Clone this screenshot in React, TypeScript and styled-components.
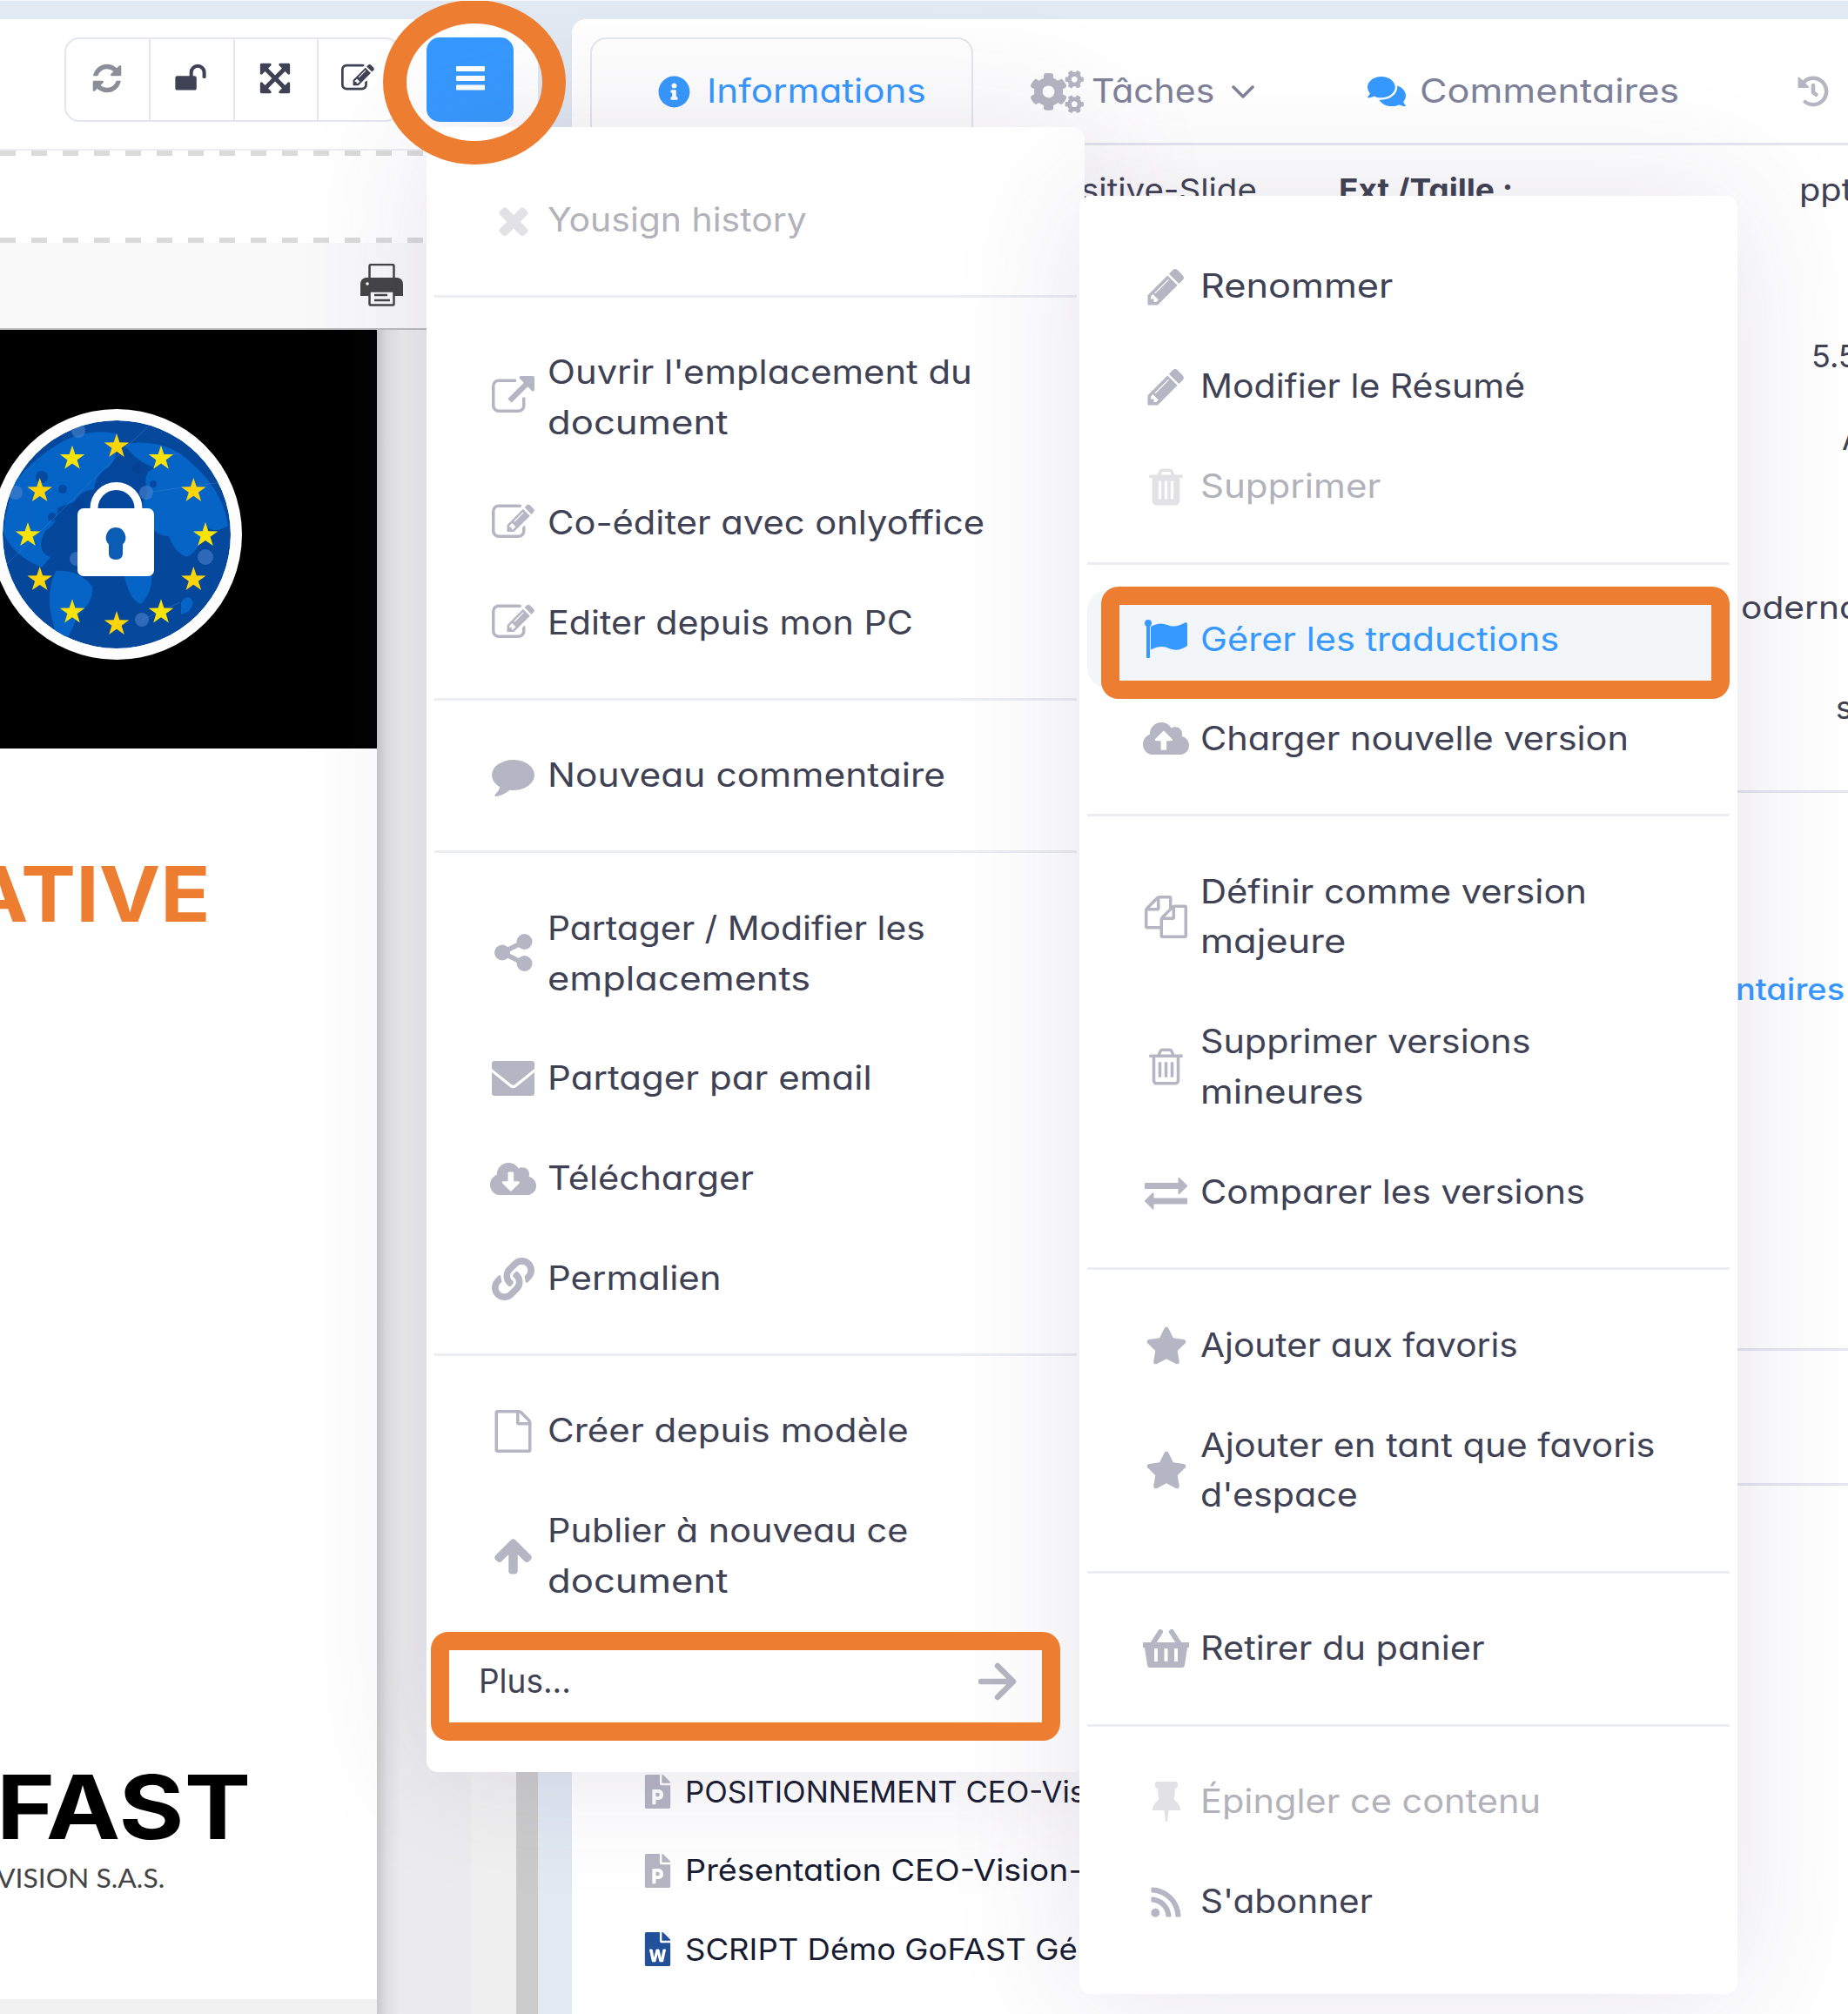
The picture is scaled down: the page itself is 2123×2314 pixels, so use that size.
import React, { useLayoutEffect, useRef, useState } from "react";
import styled, { createGlobalStyle } from "styled-components";
import {
  FaCloudDownloadAlt,
  FaCloudUploadAlt,
  FaCogs,
  FaComments,
  FaFilePowerpoint,
  FaFileWord,
  FaHistory,
  FaInfoCircle,
  FaLink,
  FaRss,
  FaStar,
} from "react-icons/fa";

const c = {
  text: "#3f4254",
  dark: "#181c32",
  muted: "#7e8299",
  icon: "#b5b5c3",
  primary: "#3699ff",
  line: "#ebedf3",
  border: "#e4e6ef",
  page: "#e1e9f2",
  mark: "#ed7d31",
};

const Global = createGlobalStyle`
  * { box-sizing: border-box; }
  body { margin: 0; background: ${c.page}; overflow: hidden; }
  svg { display: block; flex: none; }
`;

/* ---------- text stretched to a measure ---------- */

const FitBox = styled.span<{ $w: number }>`
  display: block;
  flex: none;
  width: ${(p) => p.$w}px;
`;

const FitSpan = styled.span`
  display: block;
  width: max-content;
  white-space: pre;
  transform-origin: 0 50%;
`;

function Fit({ w, children }: { w: number; children: string }) {
  const ref = useRef<HTMLSpanElement>(null);
  const [scale, setScale] = useState(1);
  useLayoutEffect(() => {
    const el = ref.current;
    if (el) setScale(w / el.offsetWidth);
  }, [w, children]);
  return (
    <FitBox $w={w}>
      <FitSpan ref={ref} style={{ transform: `scaleX(${scale})` }}>
        {children}
      </FitSpan>
    </FitBox>
  );
}

/* ---------- icons ---------- */

const glyphs = {
  external:
    "M1408 928v320q0 119-84.5 203.5t-203.5 84.5h-832q-119 0-203.5-84.5t-84.5-203.5v-832q0-119 84.5-203.5t203.5-84.5h704q14 0 23 9t9 23v64q0 14-9 23t-23 9h-704q-66 0-113 47t-47 113v832q0 66 47 113t113 47h832q66 0 113-47t47-113v-320q0-14 9-23t23-9h64q14 0 23 9t9 23zm384-864v512q0 26-19 45t-45 19-45-19l-176-176-652 652q-10 10-23 10t-23-10l-114-114q-10-10-10-23t10-23l652-652-176-176q-19-19-19-45t19-45 45-19h512q26 0 45 19t19 45z",
  edit: "M888 1184l116-116-152-152-116 116v56h96v96h56zm440-720q-16-16-33 1l-350 350q-17 17-1 33t33-1l350-350q17-17 1-33zm80 594v190q0 119-84.5 203.5t-203.5 84.5h-832q-119 0-203.5-84.5t-84.5-203.5v-832q0-119 84.5-203.5t203.5-84.5h832q63 0 117 25 15 7 18 23 3 17-9 29l-49 49q-14 14-32 8-23-6-45-6h-832q-66 0-113 47t-47 113v832q0 66 47 113t113 47h832q66 0 113-47t47-113v-126q0-13 9-22l64-64q15-15 35-7t20 29zm-96-738l288 288-672 672h-288v-288zm444 132l-92 92-288-288 92-92q28-28 68-28t68 28l152 152q28 28 28 68t-28 68z",
  trash:
    "M704 736v576q0 14-9 23t-23 9h-64q-14 0-23-9t-9-23v-576q0-14 9-23t23-9h64q14 0 23 9t9 23zm256 0v576q0 14-9 23t-23 9h-64q-14 0-23-9t-9-23v-576q0-14 9-23t23-9h64q14 0 23 9t9 23zm256 0v576q0 14-9 23t-23 9h-64q-14 0-23-9t-9-23v-576q0-14 9-23t23-9h64q14 0 23 9t9 23zm128 724v-948h-896v948q0 22 7 40.5t14.5 27 10.5 8.5h832q3 0 10.5-8.5t14.5-27 7-40.5zm-672-1076h448l-48-117q-7-9-17-11h-317q-10 2-17 11zm928 32v64q0 14-9 23t-23 9h-96v948q0 83-47 143.5t-113 60.5h-832q-66 0-113-58.5t-47-141.5v-952h-96q-14 0-23-9t-9-23v-64q0-14 9-23t23-9h309l70-167q15-37 54-63t79-26h320q40 0 79 26t54 63l70 167h309q14 0 23 9t9 23z",
  trashFull:
    "M704 1376v-704q0-14-9-23t-23-9h-64q-14 0-23 9t-9 23v704q0 14 9 23t23 9h64q14 0 23-9t9-23zm256 0v-704q0-14-9-23t-23-9h-64q-14 0-23 9t-9 23v704q0 14 9 23t23 9h64q14 0 23-9t9-23zm256 0v-704q0-14-9-23t-23-9h-64q-14 0-23 9t-9 23v704q0 14 9 23t23 9h64q14 0 23-9t9-23zm-544-992h448l-48-117q-7-9-17-11h-317q-10 2-17 11zm928 32v64q0 14-9 23t-23 9h-96v948q0 83-47 143.5t-113 60.5h-832q-66 0-113-58.5t-47-141.5v-952h-96q-14 0-23-9t-9-23v-64q0-14 9-23t23-9h309l70-167q15-37 54-63t79-26h320q40 0 79 26t54 63l70 167h309q14 0 23 9t9 23z",
  files:
    "M1696 384q40 0 68 28t28 68v1216q0 40-28 68t-68 28h-960q-40 0-68-28t-28-68v-288h-544q-40 0-68-28t-28-68v-672q0-40 20-88t48-76l408-408q28-28 76-48t88-20h416q40 0 68 28t28 68v328q68-40 128-40h416zm-544 213l-299 299h299v-299zm-640-384l-299 299h299v-299zm196 647l316-316v-416h-384v416q0 40-28 68t-68 28h-416v640h512v-256q0-40 20-88t48-76zm956 804v-1152h-384v416q0 40-28 68t-68 28h-416v640h896z",
  file: "M1596 380q28 28 48 76t20 88v1152q0 40-28 68t-68 28h-1344q-40 0-68-28t-28-68v-1600q0-40 28-68t68-28h896q40 0 88 20t76 48zm-444-244v376h376q-10-29-22-41l-313-313q-12-12-41-22zm384 1528v-1024h-416q-40 0-68-28t-28-68v-416h-768v1536h1280z",
  comment:
    "M1792 896q0 174-120 321.5t-326 233-450 85.5q-70 0-145-8-198 175-460 242-49 14-114 22-17 2-30.5-9t-17.5-29v-1q-3-4-.5-12t2-10 4.5-9.5l6-9 7-8.5 8-9q7-8 31-34.5t34.5-38 31-39.5 32.5-51 27-59 26-76q-157-89-247.5-220t-90.5-281q0-130 71-248.5t191-204.5 286-136.5 348-50.5q244 0 450 85.5t326 233 120 321.5z",
  pencil:
    "M491 1536l91-91-235-235-91 91v107h128v128h107zm523-928q0-22-22-22-10 0-17 7l-542 542q-7 7-7 17 0 22 22 22 10 0 17-7l542-542q7-7 7-17zm-54-192l416 416-832 832h-416v-416zm683 96q0 53-37 90l-166 166-416-416 166-165q36-38 90-38 53 0 91 38l235 234q37 39 37 91z",
  times:
    "M1490 1322q0 40-28 68l-136 136q-28 28-68 28t-68-28l-294-294-294 294q-28 28-68 28t-68-28l-136-136q-28-28-28-68t28-68l294-294-294-294q-28-28-28-68t28-68l136-136q28-28 68-28t68 28l294 294 294-294q28-28 68-28t68 28l136 136q28 28 28 68t-28 68l-294 294 294 294q28 28 28 68z",
  arrowUp:
    "M1675 971q0 51-37 90l-75 75q-38 38-91 38-54 0-90-38l-294-293v704q0 52-37.5 84.5t-90.5 32.5h-128q-53 0-90.5-32.5t-37.5-84.5v-704l-294 293q-36 38-90 38t-90-38l-75-75q-38-38-38-90 0-53 38-91l651-651q35-37 90-37 54 0 91 37l651 651q37 39 37 91z",
  refresh:
    "M1639 1056q0 5-1 7-64 268-268 434.5t-478 166.5q-146 0-282.5-55t-243.5-157l-129 129q-19 19-45 19t-45-19-19-45v-448q0-26 19-45t45-19h448q26 0 45 19t19 45-19 45l-137 137q71 66 161 102t187 36q134 0 250-65t186-179q11-17 53-117 8-23 30-23h192q13 0 22.5 9.5t9.5 22.5zm25-800v448q0 26-19 45t-45 19h-448q-26 0-45-19t-19-45 19-45l138-138q-148-137-349-137-134 0-250 65t-186 179q-11 17-53 117-8 23-30 23h-199q-13 0-22.5-9.5t-9.5-22.5v-7q65-268 270-434.5t480-166.5q146 0 284 55.5t245 156.5l130-129q19-19 45-19t45 19 19 45z",
  exchange:
    "M1792 1184v192q0 13-9.5 22.5t-22.5 9.5h-1376v192q0 13-9.5 22.5t-22.5 9.5q-12 0-24-10l-319-320q-9-9-9-22 0-14 9-23l320-320q9-9 23-9 13 0 22.5 9.5t9.5 22.5v192h1376q13 0 22.5 9.5t9.5 22.5zm0-544q0 14-9 23l-320 320q-9 9-23 9-13 0-22.5-9.5t-9.5-22.5v-192h-1376q-13 0-22.5-9.5t-9.5-22.5v-192q0-13 9.5-22.5t22.5-9.5h1376v-192q0-14 9-23t23-9q12 0 24 10l319 319q9 9 9 23z",
  unlock:
    "M1728 576v256q0 26-19 45t-45 19h-64q-26 0-45-19t-19-45v-256q0-106-75-181t-181-75-181 75-75 181v192h96q40 0 68 28t28 68v576q0 40-28 68t-68 28h-960q-40 0-68-28t-28-68v-576q0-40 28-68t68-28h672v-192q0-185 131.5-316.5t316.5-131.5 316.5 131.5 131.5 316.5z",
  expand:
    "M1411 541l-355 355 355 355 144-144q29-31 70-14 39 17 39 59v448q0 26-19 45t-45 19h-448q-42 0-59-40-17-39 14-69l144-144-355-355-355 355 144 144q31 30 14 69-17 40-59 40h-448q-26 0-45-19t-19-45v-448q0-42 40-59 39-17 69 14l144 144 355-355-355-355-144 144q-19 19-45 19-12 0-24-5-40-17-40-59v-448q0-26 19-45t45-19h448q42 0 59 40 17 39-14 69l-144 144 355 355 355-355-144-144q-31-30-14-69 17-40 59-40h448q26 0 45 19t19 45v448q0 42-39 59-13 5-25 5-26 0-45-19z",
};

const Glyph = ({ name, size = 49 }: { name: keyof typeof glyphs; size?: number }) => (
  <svg width={size} height={size} viewBox="0 0 1792 1792" fill="currentColor">
    <path d={glyphs[name]} />
  </svg>
);

const Share = () => (
  <svg width="44" height="43" viewBox="0 0 44 43" fill="currentColor">
    <path d="M34 9L9 21.500 34 34" fill="none" stroke="currentColor" strokeWidth="5.500" />
    <circle cx="34.500" cy="9" r="9" />
    <circle cx="9" cy="21.500" r="9" />
    <circle cx="34.500" cy="34" r="9" />
  </svg>
);

const Envelope = () => (
  <svg width="49" height="40" viewBox="0 0 49 40" fill="currentColor">
    <path d="M3 0h43q3 0 3 3v6L26.500 27q-2 1.500-4 0L0 9V3q0-3 3-3z" />
    <path d="M0 13l21 17q3.500 2.500 7 0l21-17v24q0 3-3 3H3q-3 0-3-3z" />
  </svg>
);

const Flag = () => (
  <svg width="49" height="44" viewBox="0 0 49 44" fill="currentColor">
    <circle cx="4" cy="4" r="4" />
    <rect x="2" y="3" width="4" height="41" rx="1" />
    <path d="M7 8q10-6 19-2 9 4 20-2.500 3-1 3 1.500v25q-11 7.500-21 3-9-4.500-21 1.500z" />
  </svg>
);

const Basket = () => (
  <svg width="55" height="44" viewBox="0 0 55 44">
    <path d="M12 17L21 3M43 17L34 3" stroke="currentColor" strokeWidth="6" strokeLinecap="round" />
    <path
      fill="currentColor"
      fillRule="evenodd"
      d="M1 15h53v6h-2l-3 20q-.5 3-3 3H9q-2.500 0-3-3L3 21H1zM14 22v15h4V22zm11.500 0v15h4V22zM37 22v15h4V22z"
    />
  </svg>
);

const Pin = () => (
  <svg width="32" height="46" viewBox="0 0 32 46" fill="currentColor">
    <path d="M5 0h22q2 0 2 2.500V5q0 2-3 3l-1 13q7 5 7 12H0q0-7 7-12L6 8Q3 7 3 5V2.500Q3 0 5 0z" />
    <path d="M13.500 33h5L17 46h-2z" />
  </svg>
);

const ArrowRight = () => (
  <svg width="44" height="44" viewBox="0 0 44 44" fill="none" stroke="currentColor" strokeWidth="6.500" strokeLinecap="round" strokeLinejoin="round">
    <path d="M3 22h36M22 4l18 18-18 18" />
  </svg>
);

const Chevron = () => (
  <svg width="26" height="15" viewBox="0 0 26 15" fill="none" stroke="currentColor" strokeWidth="3.500" strokeLinecap="round" strokeLinejoin="round">
    <path d="M2 2l11 11L24 2" />
  </svg>
);

const Bars = () => (
  <svg width="33" height="28" viewBox="0 0 33 28" fill="#fff">
    <rect width="33" height="6" rx="1" />
    <rect y="11" width="33" height="6" rx="1" />
    <rect y="21.500" width="33" height="6" rx="1" />
  </svg>
);

const Printer = () => (
  <svg width="49" height="49" viewBox="0 0 49 49">
    <path d="M10.500 16V3q0-2 2-2h24q2 0 2 2v13" fill="#fafafa" stroke="#444" strokeWidth="2.500" />
    <path d="M6 16h37q6 1 6 8v13H0V24q0-7 6-8z" fill="#444" />
    <circle cx="8" cy="23" r="1.800" fill="#fff" />
    <rect x="10.500" y="31.500" width="28" height="16" rx="1" fill="#fafafa" stroke="#444" strokeWidth="2.500" />
    <path d="M16 36h15M16 42h18" stroke="#444" strokeWidth="2.600" />
  </svg>
);

const starPoints = (cx: number, cy: number, r: number) =>
  Array.from({ length: 10 }, (_, i) => {
    const a = (Math.PI / 5) * i - Math.PI / 2;
    const rr = i % 2 ? r * 0.39 : r;
    return `${(cx + rr * Math.cos(a)).toFixed(1)},${(cy + rr * Math.sin(a)).toFixed(1)}`;
  }).join(" ");

const PrivacyBadge = () => (
  <svg width="290" height="290" viewBox="-145 -145 290 290">
    <defs>
      <clipPath id="globe">
        <circle r="131" />
      </clipPath>
    </defs>
    <circle r="144" fill="#fdfdfd" />
    <g clipPath="url(#globe)">
      <circle r="131" fill="#05489c" />
      <g fill="#0564c6">
        <path d="M-60-108q30-14 60-8 4 22-8 38-16 8-18 26-16 2-22 14l-20 8q2 16-14 26-12 24 6 30l-10 12q-34-14-44-40 4-36 14-60 26-30 56-46z" />
        <path d="M8-104q50-8 80 24 34 30 40 70-16 10-26 0-6 30-22 36-14-6-20-24-18 0-24-20-12-14 0-30-8-24 8-28-22-8-36-28z" />
        <path d="M-70 42q26-2 42 18 2 18-18 34-6 24-20 34l-8-30q-8-30 4-56z" />
        <path d="M8 44h32q2 22-12 36-14-4-20-36z" />
        <path d="M74 78q8-12 14 0-2 12-14 14z" />
      </g>
      <g fill="#063f92" opacity=".7">
        <circle cx="-62" cy="-52" r="5" />
        <circle cx="-86" cy="-66" r="7" />
        <circle cx="-44" cy="-34" r="6" />
        <circle cx="24" cy="-76" r="6" />
        <circle cx="42" cy="-58" r="4" />
        <circle cx="-74" cy="-20" r="5" />
      </g>
      <g fill="#4c83cf" opacity=".6">
        <circle cx="-44" cy="-119" r="8" />
        <circle cx="-116" cy="-48" r="8" />
        <circle cx="102" cy="26" r="9" />
        <circle cx="29" cy="98" r="8" />
        <circle cx="34" cy="-48" r="8" />
        <circle cx="-46" cy="28" r="8" />
      </g>
      <path d="M-132 40L-20-70 40-128M34-48l86-12M29 98l44-20" stroke="#4c83cf" strokeOpacity=".45" fill="none" />
    </g>
    {Array.from({ length: 12 }, (_, i) => {
      const a = (Math.PI / 6) * i;
      return <polygon key={i} points={starPoints(102 * Math.cos(a), 1 + 102 * Math.sin(a), 15)} fill={i % 2 ? "#fbd40c" : "#f7e30a"} />;
    })}
    <path d="M-26-26v-4a25.500 25.500 0 0 1 51 0v4" fill="none" stroke="#fff" strokeWidth="9" />
    <rect x="-45" y="-30" width="88" height="78" rx="7" fill="#fff" />
    <path d="M-1-8a11.500 11.500 0 0 1 8 19.500V22q0 7-8 7t-8-7V11.500A11.500 11.500 0 0 1-1-8z" fill="#0a5cb5" />
  </svg>
);

/* ---------- page frame ---------- */

const Page = styled.div`
  position: relative;
  display: flex;
  gap: 39px;
  width: 2123px;
  height: 2314px;
  padding-top: 21px;
  overflow: hidden;
  background: ${c.page};
  border-top: 1px solid #f7f9fb;
  color: ${c.text};
  font: 400 38px/57.5px Inter, "Open Sans", sans-serif;
  font-feature-settings: "cv11", "ss03";
`;

const DocumentPane = styled.section`
  display: flex;
  flex-direction: column;
  flex: none;
  width: 618px;
  background: #fff;
  border-top-right-radius: 16px;
  overflow: hidden;
`;

const Toolbar = styled.div`
  display: flex;
  align-items: flex-start;
  gap: 30px;
  height: 151px;
  padding: 21px 0 0 74px;
  border-bottom: 2px solid ${c.line};
`;

const ButtonGroup = styled.div`
  display: flex;
  height: 97px;
  width: 386px;
  border: 2px solid ${c.border};
  border-radius: 17px;
`;

const ToolButton = styled.div<{ $dim?: boolean }>`
  display: flex;
  align-items: center;
  justify-content: center;
  flex: 0 0 96.500px;
  padding: 0 2px 3px 0;
  color: ${(p) => (p.$dim ? "#8b8d98" : c.text)};
  & + & {
    border-left: 2px solid ${c.border};
  }
  &:first-child {
    flex-basis: 95px;
  }
  &:last-child {
    padding-right: 5px;
  }
`;

const MenuButton = styled.div`
  display: flex;
  align-items: center;
  justify-content: center;
  width: 100px;
  height: 97px;
  padding-bottom: 3px;
  border-radius: 15px;
  background: ${c.primary};
`;

const DropStrip = styled.div`
  height: 106px;
  border: solid transparent;
  border-width: 6px 0;
  background:
    repeating-linear-gradient(90deg, #dadada 0 18px, transparent 18px 36px) top / 100% 6px no-repeat border-box,
    repeating-linear-gradient(90deg, #dadada 0 18px, transparent 18px 36px) bottom / 100% 6px no-repeat border-box;
`;

const ViewerBar = styled.div`
  display: flex;
  align-items: center;
  height: 100px;
  padding-left: 414px;
  padding-bottom: 2px;
  background: #f9f9fa;
  border-bottom: 2px solid #bdbdbf;
`;

const Viewer = styled.div`
  display: flex;
  flex: 1;
  background: #ececef;
`;

const SlideColumn = styled.div`
  display: flex;
  flex-direction: column;
  width: 433px;
  background: #f1f1f1;
`;

const Slide = styled.div`
  display: flex;
  flex-direction: column;
  height: 1918px;
  background: #fff;
`;

const SlideHero = styled.div`
  height: 481px;
  padding-top: 90px;
  background: #000;
  overflow: hidden;
  svg {
    margin-left: -11px;
  }
`;

const SlideTitle = styled.div`
  margin: 112px 0 0 -38px;
  font: 700 88px/110px Inter, sans-serif;
  color: ${c.mark};
`;

const SlideBrand = styled.div`
  margin: 934px 0 0 -4px;
  font: 700 102px/120px Inter, sans-serif;
  color: #000;
`;

const SlideCompany = styled.div`
  margin: 1px 0 0 -4px;
  font: 400 31px/40px Lato, sans-serif;
  color: #444;
`;

const PageShade = styled.div`
  width: 108px;
  background: linear-gradient(90deg, #c9c9cb, #e0e0e3 12px, #ececef 28px);
`;

const ViewerGutter = styled.div`
  flex: 1;
  background: #f0f0f0;
`;

const Scrollbar = styled.div`
  width: 25px;
  background: #cbcbcb;
`;

/* ---------- right panel ---------- */

const InfoPane = styled.section`
  display: flex;
  flex-direction: column;
  flex: none;
  width: 1500px;
  background: #fff;
  border-top-left-radius: 16px;
`;

const Tabs = styled.nav`
  display: flex;
  height: 145px;
  padding: 21px 0 0 21px;
  border-bottom: 3px solid ${c.border};
  color: ${c.muted};
`;

const Tab = styled.div<{ $w: number; $gap: number; $active?: boolean }>`
  display: flex;
  align-items: center;
  flex: none;
  gap: ${(p) => p.$gap}px;
  width: ${(p) => p.$w}px;
  height: 122px;
  border: 2px solid ${(p) => (p.$active ? c.border : "transparent")};
  border-bottom: 0;
  border-radius: 18px 18px 0 0;
  color: ${(p) => (p.$active ? c.primary : "inherit")};
  padding-left: ${(p) => (p.$active ? 76 : 64)}px;
`;

const Tint = styled.span<{ $color: string }>`
  color: ${(p) => p.$color};
`;

const ChevronSlot = styled.span`
  margin-left: 11px;
`;

const Section = styled.div<{ $h: number }>`
  display: flex;
  flex-direction: column;
  flex: none;
  height: ${(p) => p.$h}px;
  border-bottom: 3px solid ${c.border};
`;

const InfoRow = styled.div<{ $top: number; $left: number }>`
  display: flex;
  flex: none;
  height: 56px;
  margin-top: ${(p) => p.$top}px;
  padding-left: ${(p) => p.$left}px;
  font-size: 36px;
  line-height: 56px;
`;

const Label = styled.span`
  width: 529px;
  font-weight: 700;
`;

const ValueCell = styled.span`
  width: 296px;
`;

const PaneLink = styled.span`
  color: ${c.primary};
  font-weight: 500;
  font-size: 34px;
`;

const Files = styled.ul`
  list-style: none;
  margin: 306px 0 0;
  padding: 0 0 0 84px;
`;

const FileRow = styled.li`
  display: flex;
  align-items: center;
  gap: 18px;
  height: 90.700px;
  font-size: 34.500px;
  color: ${c.dark};
`;

const FileIcon = styled.span<{ $color: string }>`
  display: flex;
  justify-content: center;
  width: 28px;
  color: ${(p) => p.$color};
`;

/* ---------- menus ---------- */

const Menu = styled.div<{ $x: number; $y: number; $h: number; $pad: number }>`
  position: absolute;
  left: ${(p) => p.$x}px;
  top: ${(p) => p.$y}px;
  width: 756px;
  height: ${(p) => p.$h}px;
  padding: ${(p) => p.$pad}px 9px 0;
  background: #fff;
  border-radius: 13px;
  box-shadow: 0 0 147px rgba(82, 63, 105, 0.15);
`;

const Item = styled.div<{ $state?: string; $lh?: number }>`
  display: flex;
  align-items: center;
  padding: 28.750px 0 28.750px 53px;
  border-radius: 24px;
  line-height: ${(p) => p.$lh ?? 57.5}px;
  color: ${(p) => (p.$state === "active" ? c.primary : c.text)};
  background: ${(p) => (p.$state === "active" ? "#f3f6f9" : "transparent")};
  opacity: ${(p) => (p.$state === "off" ? 0.4 : 1)};
`;

const IconSlot = styled.span<{ $active?: boolean }>`
  display: flex;
  justify-content: center;
  flex: none;
  width: 75px;
  margin-right: 2px;
  color: ${(p) => (p.$active ? c.primary : c.icon)};
`;

const MoreItem = styled(Item)`
  justify-content: space-between;
  padding-left: 51px;
  padding-right: 69px;
  svg {
    color: ${c.icon};
  }
`;

const Divider = styled.hr<{ $m: number }>`
  height: 3px;
  margin: ${(p) => p.$m}px 0;
  border: 0;
  background: ${c.line};
`;

/* ---------- annotations ---------- */

const Ring = styled.div`
  position: absolute;
  left: 440px;
  top: -1px;
  width: 210px;
  height: 189px;
  border: 27px solid ${c.mark};
  border-radius: 50%;
`;

const Frame = styled.div<{ $x: number; $y: number; $w: number; $h: number }>`
  position: absolute;
  left: ${(p) => p.$x}px;
  top: ${(p) => p.$y}px;
  width: ${(p) => p.$w}px;
  height: ${(p) => p.$h}px;
  border: 21px solid ${c.mark};
  border-radius: 20px;
`;

type Entry = { icon: React.ReactNode; lines: [string, number][]; state?: string; lh?: number };

const mainMenu: Entry[][] = [
  [{ icon: <Glyph name="times" size={50} />, lines: [["Yousign history", 298]], state: "off" }],
  [
    { icon: <Glyph name="external" />, lines: [["Ouvrir l'emplacement du", 488], ["document", 208]] },
    { icon: <Glyph name="edit" />, lines: [["Co-éditer avec onlyoffice", 502]] },
    { icon: <Glyph name="edit" />, lines: [["Editer depuis mon PC", 420]] },
  ],
  [{ icon: <Glyph name="comment" />, lines: [["Nouveau commentaire", 457]] }],
  [
    { icon: <Share />, lines: [["Partager / Modifier les", 434], ["emplacements", 302]], lh: 58 },
    { icon: <Envelope />, lines: [["Partager par email", 373]] },
    { icon: <FaCloudDownloadAlt size={53} />, lines: [["Télécharger", 237]] },
    { icon: <FaLink size={49} />, lines: [["Permalien", 200]] },
  ],
  [
    { icon: <Glyph name="file" />, lines: [["Créer depuis modèle", 415]] },
    { icon: <Glyph name="arrowUp" />, lines: [["Publier à nouveau ce", 414], ["document", 208]] },
  ],
];

const subMenu: Entry[][] = [
  [
    { icon: <Glyph name="pencil" />, lines: [["Renommer", 221]] },
    { icon: <Glyph name="pencil" />, lines: [["Modifier le Résumé", 373]] },
    { icon: <Glyph name="trashFull" />, lines: [["Supprimer", 207]], state: "off" },
  ],
  [
    { icon: <Flag />, lines: [["Gérer les traductions", 412]], state: "active", lh: 56 },
    { icon: <FaCloudUploadAlt size={53} />, lines: [["Charger nouvelle version", 492]] },
  ],
  [
    { icon: <Glyph name="files" />, lines: [["Définir comme version", 444], ["majeure", 167]] },
    { icon: <Glyph name="trash" />, lines: [["Supprimer versions", 380], ["mineures", 187]] },
    { icon: <Glyph name="exchange" />, lines: [["Comparer les versions", 442]] },
  ],
  [
    { icon: <FaStar size={48} />, lines: [["Ajouter aux favoris", 365]] },
    { icon: <FaStar size={48} />, lines: [["Ajouter en tant que favoris", 522], ["d'espace", 181]] },
  ],
  [{ icon: <Basket />, lines: [["Retirer du panier", 327]] }],
  [
    { icon: <Pin />, lines: [["Épingler ce contenu", 391]], state: "off" },
    { icon: <FaRss size={39} />, lines: [["S'abonner", 198]] },
  ],
];

const Groups = ({ groups, spacing }: { groups: Entry[][]; spacing: number }) => (
  <>
    {groups.map((group, g) => (
      <React.Fragment key={g}>
        {g > 0 && <Divider $m={spacing} />}
        {group.map((entry, i) => (
          <Item key={i} $state={entry.state} $lh={entry.lh}>
            <IconSlot $active={entry.state === "active"}>{entry.icon}</IconSlot>
            <div>
              {entry.lines.map(([text, w]) => (
                <Fit key={text} w={w}>
                  {text}
                </Fit>
              ))}
            </div>
          </Item>
        ))}
      </React.Fragment>
    ))}
  </>
);

export default function App() {
  return (
    <Page>
      <Global />
      <DocumentPane>
        <Toolbar>
          <ButtonGroup>
            <ToolButton $dim><Glyph name="refresh" size={38} /></ToolButton>
            <ToolButton><Glyph name="unlock" size={38} /></ToolButton>
            <ToolButton><Glyph name="expand" size={40} /></ToolButton>
            <ToolButton><Glyph name="edit" size={38} /></ToolButton>
          </ButtonGroup>
          <MenuButton><Bars /></MenuButton>
        </Toolbar>
        <DropStrip />
        <ViewerBar><Printer /></ViewerBar>
        <Viewer>
          <SlideColumn>
            <Slide>
              <SlideHero><PrivacyBadge /></SlideHero>
              <SlideTitle><Fit w={279}>ATIVE</Fit></SlideTitle>
              <SlideBrand><Fit w={292}>FAST</Fit></SlideBrand>
              <SlideCompany><Fit w={193}>VISION S.A.S.</Fit></SlideCompany>
            </Slide>
          </SlideColumn>
          <PageShade />
          <ViewerGutter />
          <Scrollbar />
        </Viewer>
      </DocumentPane>

      <InfoPane>
        <Tabs>
          <Tab $active $w={440} $gap={19}>
            <FaInfoCircle size={37} />
            <Fit w={252}>Informations</Fit>
          </Tab>
          <Tab $w={387} $gap={9}>
            <Tint $color={c.icon}><FaCogs size={61} /></Tint>
            <Fit w={141}>Tâches</Fit>
            <ChevronSlot><Chevron /></ChevronSlot>
          </Tab>
          <Tab $w={494} $gap={16}>
            <Tint $color={c.primary}><FaComments size={44} /></Tint>
            <Fit w={298}>Commentaires</Fit>
          </Tab>
          <Tab $w={200} $gap={17}>
            <Tint $color={c.icon}><FaHistory size={36} /></Tint>
          </Tab>
        </Tabs>
        <Section $h={744}>
          <InfoRow $top={23} $left={585}>
            <ValueCell><Fit w={202}>sitive-Slide</Fit></ValueCell>
            <Label><Fit w={200}>Ext /Taille :</Fit></Label>
            <Fit w={84}>pptx</Fit>
          </InfoRow>
          <InfoRow $top={135} $left={1424}>5.59</InfoRow>
          <InfoRow $top={39} $left={1459}>A</InfoRow>
          <InfoRow $top={138} $left={1343}><Fit w={138}>oderna</Fit></InfoRow>
          <InfoRow $top={59} $left={1452}>s</InfoRow>
        </Section>
        <Section $h={641}>
          <InfoRow $top={198} $left={1337}>
            <PaneLink><Fit w={125}>ntaires</Fit></PaneLink>
          </InfoRow>
        </Section>
        <Section $h={155} />
        <Files>
          <FileRow>
            <FileIcon $color={c.icon}><FaFilePowerpoint size={39} /></FileIcon>
            <Fit w={460}>POSITIONNEMENT CEO-Vis</Fit>
          </FileRow>
          <FileRow>
            <FileIcon $color={c.icon}><FaFilePowerpoint size={39} /></FileIcon>
            <Fit w={458}>Présentation CEO-Vision-</Fit>
          </FileRow>
          <FileRow>
            <FileIcon $color="#23509b"><FaFileWord size={39} /></FileIcon>
            <Fit w={472}>SCRIPT Démo GoFAST Gén</Fit>
          </FileRow>
        </Files>
      </InfoPane>

      <Menu $x={490} $y={145} $h={1890} $pad={49.5}>
        <Groups groups={mainMenu} spacing={28.5} />
        <MoreItem>
          <Fit w={106}>Plus...</Fit>
          <ArrowRight />
        </MoreItem>
      </Menu>
      <Menu $x={1240} $y={224} $h={2066} $pad={46.5}>
        <Groups groups={subMenu} spacing={29} />
      </Menu>

      <Ring />
      <Frame $x={495} $y={1874} $w={723} $h={125} />
      <Frame $x={1265} $y={673} $w={722} $h={129} />
    </Page>
  );
}
